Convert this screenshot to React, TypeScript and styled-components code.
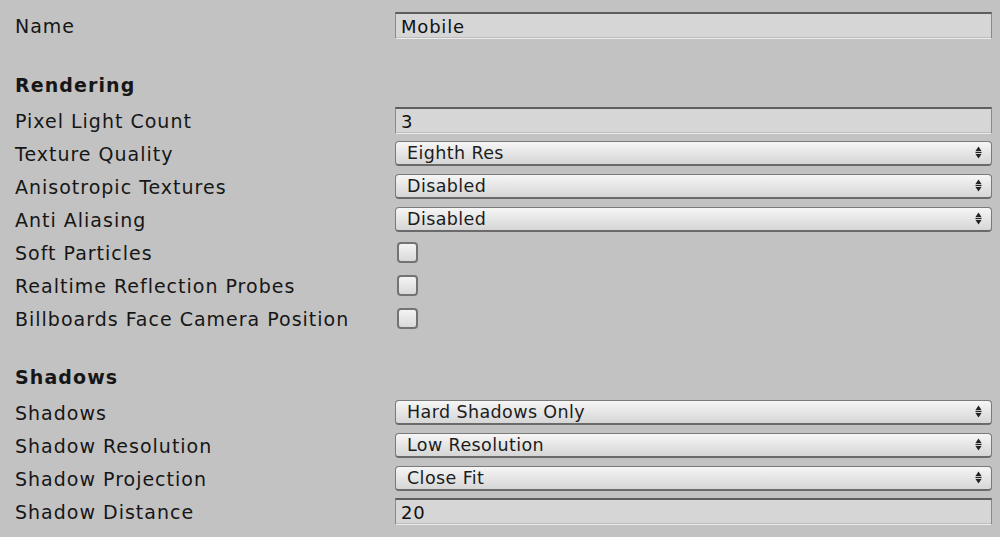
import styled, { createGlobalStyle } from 'styled-components';

const GlobalStyle = createGlobalStyle`
  html, body {
    margin: 0;
    padding: 0;
    background: #c2c2c2;
  }
  body {
    font-family: "DejaVu Sans", Verdana, sans-serif;
    color: #161616;
  }
`;

type Field =
  | { kind: 'text'; value: string }
  | { kind: 'select'; value: string }
  | { kind: 'check' };

interface Row {
  label: string;
  field: Field;
}

const sections: { title: string; rows: Row[] }[] = [
  {
    title: 'Rendering',
    rows: [
      { label: 'Pixel Light Count', field: { kind: 'text', value: '3' } },
      { label: 'Texture Quality', field: { kind: 'select', value: 'Eighth Res' } },
      { label: 'Anisotropic Textures', field: { kind: 'select', value: 'Disabled' } },
      { label: 'Anti Aliasing', field: { kind: 'select', value: 'Disabled' } },
      { label: 'Soft Particles', field: { kind: 'check' } },
      { label: 'Realtime Reflection Probes', field: { kind: 'check' } },
      { label: 'Billboards Face Camera Position', field: { kind: 'check' } },
    ],
  },
  {
    title: 'Shadows',
    rows: [
      { label: 'Shadows', field: { kind: 'select', value: 'Hard Shadows Only' } },
      { label: 'Shadow Resolution', field: { kind: 'select', value: 'Low Resolution' } },
      { label: 'Shadow Projection', field: { kind: 'select', value: 'Close Fit' } },
      { label: 'Shadow Distance', field: { kind: 'text', value: '20' } },
    ],
  },
];

const Inspector = styled.div`
  width: 1000px;
  height: 537px;
  box-sizing: border-box;
  padding: 9px 8px 0 15px;
  overflow: hidden;
`;

const Section = styled.section`
  margin-top: 26px;
  &:last-child {
    margin-top: 25px;
  }
`;

const Heading = styled.div`
  height: 33px;
  display: flex;
  align-items: center;
  font-size: 19px;
  font-weight: bold;
  letter-spacing: 1.1px;
  margin-bottom: 3px;
`;

const PropRow = styled.div`
  display: grid;
  grid-template-columns: 380px 1fr;
  align-items: center;
  height: 33px;
`;

const Label = styled.span`
  font-size: 19px;
  letter-spacing: 1px;
  white-space: nowrap;
`;

const TextField = styled.div`
  height: 27px;
  box-sizing: border-box;
  border: 1px solid #8a8a8a;
  border-top: 2px solid #5e5e5e;
  border-bottom-color: #ececec;
  background: #d6d6d6;
  padding: 0 5px;
  display: flex;
  align-items: center;
  font-size: 18px;
  letter-spacing: 0.8px;
  color: #111;
  box-shadow: inset 0 -1px 0 #bdbdbd;
`;

const Select = styled.div`
  height: 25px;
  margin-top: -1px;
  box-sizing: border-box;
  border: 1px solid #7a7a7a;
  border-bottom: 2px solid #6a6a6a;
  border-radius: 4px;
  background: linear-gradient(#f6f6f6, #e4e4e4 55%, #d6d6d6);
  padding: 0 9px 0 11px;
  display: flex;
  align-items: center;
  justify-content: space-between;
  font-size: 17.5px;
  letter-spacing: 0.4px;
  color: #1c1c1c;
`;

const Check = styled.div`
  width: 21px;
  height: 21px;
  margin-left: 2px;
  box-sizing: border-box;
  border: 2px solid #737373;
  border-radius: 4px;
  background: linear-gradient(#f4f4f4, #d9d9d9);
`;

const Arrows = () => (
  <svg width="7" height="13" viewBox="0 0 7 13">
    <path d="M3.5 0.5 L6.5 5 L0.5 5 Z" fill="#222" />
    <rect x="0.5" y="5.8" width="6" height="1.3" fill="#222" />
    <path d="M0.5 8 L6.5 8 L3.5 12.5 Z" fill="#222" />
  </svg>
);

const renderField = (field: Field) => {
  if (field.kind === 'text') return <TextField>{field.value}</TextField>;
  if (field.kind === 'select')
    return (
      <Select>
        <span>{field.value}</span>
        <Arrows />
      </Select>
    );
  return <Check />;
};

export default function App() {
  return (
    <>
      <GlobalStyle />
      <Inspector>
        <PropRow>
          <Label>Name</Label>
          <TextField>Mobile</TextField>
        </PropRow>
        {sections.map((s) => (
          <Section key={s.title}>
            <Heading>{s.title}</Heading>
            {s.rows.map((r) => (
              <PropRow key={r.label}>
                <Label>{r.label}</Label>
                <div>{renderField(r.field)}</div>
              </PropRow>
            ))}
          </Section>
        ))}
      </Inspector>
    </>
  );
}
